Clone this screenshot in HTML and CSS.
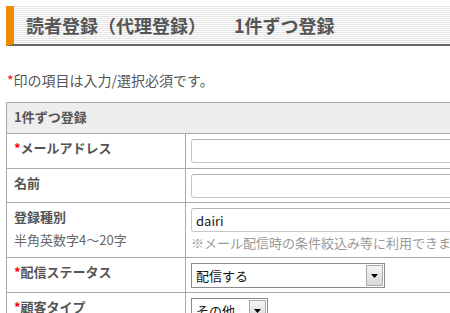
FILE: index.html
```html
<!DOCTYPE html>
<html lang="ja">
<head>
  <meta charset="UTF-8" />
  <title>読者登録（代理登録）　1件ずつ登録</title>
  <link rel="stylesheet" href="styles.css">
</head>
<body>
  <h1 class="page-title">読者登録（代理登録）<span class="sub">1件ずつ登録</span></h1>

  <p class="note"><span class="req">*</span>印の項目は入力/選択必須です。</p>

  <table class="form-table">
    <tr class="row-caption">
      <th colspan="2" class="caption">1件ずつ登録</th>
    </tr>
    <tr class="row-1">
      <th><span class="req">*</span>メールアドレス</th>
      <td><input type="text" class="text-input"></td>
    </tr>
    <tr class="row-2">
      <th>名前</th>
      <td><input type="text" class="text-input"></td>
    </tr>
    <tr class="row-3">
      <th>登録種別<br><span class="hint">半角英数字4～20字</span></th>
      <td>
        <input type="text" class="text-input" value="dairi">
        <div class="help">※メール配信時の条件絞込み等に利用できます。</div>
      </td>
    </tr>
    <tr class="row-4">
      <th><span class="req">*</span>配信ステータス</th>
      <td>
        <label class="select-box wide">
          <select><option>配信する</option><option>配信しない</option></select>
          <span class="arrow"><svg width="7" height="4" viewBox="0 0 7 4"><path d="M0 0h7L3.5 4z" fill="#000"/></svg></span>
        </label>
      </td>
    </tr>
    <tr class="row-5">
      <th><span class="req">*</span>顧客タイプ</th>
      <td>
        <label class="select-box narrow">
          <select><option>その他</option></select>
          <span class="arrow"><svg width="7" height="4" viewBox="0 0 7 4"><path d="M0 0h7L3.5 4z" fill="#000"/></svg></span>
        </label>
      </td>
    </tr>
  </table>
</body>
</html>
```

FILE: styles.css
```css
body {
  font-family: "Noto Sans CJK JP", "Noto Sans", sans-serif;
  font-size: 13px;
  color: #555;
  margin: 6px;
  width: 640px;
  overflow: hidden;
}
.page-title {
  margin: 0;
  height: 38px;
  line-height: 38px;
  padding-left: 12px;
  font-size: 18px;
  font-weight: bold;
  color: #555;
  white-space: nowrap;
  border-left: 8px solid #f08c00;
  border-bottom: 2px solid #666;
  background: repeating-linear-gradient(#e3e3e3 0 1px, #fff 1px 2px);
}
.page-title .sub {
  margin-left: 28px;
}
.note {
  margin: 25px 0 13px 1px;
  font-size: 14px;
  line-height: 18px;
}
.req {
  color: #f00;
}
.form-table {
  width: 640px;
  border-collapse: collapse;
  border: 1px solid #aaa;
}
.form-table th,
.form-table td {
  border: 1px solid #aaa;
  text-align: left;
  vertical-align: top;
}
.form-table th {
  width: 164px;
  padding: 4px 7px 0;
  font-weight: bold;
  line-height: 20px;
}
.form-table td {
  padding: 5px 5px 0;
}
.form-table .caption {
  padding: 4px 7px 0;
  background: #eee;
}
.row-caption { height: 31px; }
.row-1 { height: 35px; }
.row-2 { height: 34px; }
.row-3 { height: 55px; }
.row-4 { height: 35px; }
.row-5 { height: 35px; }
.hint {
  display: inline-block;
  margin-top: 2px;
  font-weight: normal;
  color: #666;
  line-height: 22px;
}
.text-input {
  display: block;
  box-sizing: border-box;
  width: 420px;
  height: 24px;
  margin: 0;
  padding: 0 4px;
  font: inherit;
  color: #222;
  border: 1px solid #c8c8c8;
  border-top-color: #b4b4b4;
  border-radius: 3px;
  background: #fff;
}
.help {
  color: #999;
  margin-top: 1px;
  line-height: 20px;
  white-space: nowrap;
}
.select-box {
  display: inline-flex;
  box-sizing: border-box;
  height: 25px;
  border: 1px solid #8a8a8a;
  background: #fff;
}
.select-box.wide { width: 194px; }
.select-box.narrow { width: 77px; }
.select-box select {
  flex: 1;
  min-width: 0;
  appearance: none;
  -webkit-appearance: none;
  border: none;
  outline: none;
  background: transparent;
  font: inherit;
  color: #111;
  padding: 0 4px;
}
.select-box .arrow {
  display: flex;
  align-items: center;
  justify-content: center;
  width: 15px;
  margin: 1px;
  border: 1px solid #aaa;
  background: linear-gradient(#f4f4f4, #d8d8d8);
}
```
